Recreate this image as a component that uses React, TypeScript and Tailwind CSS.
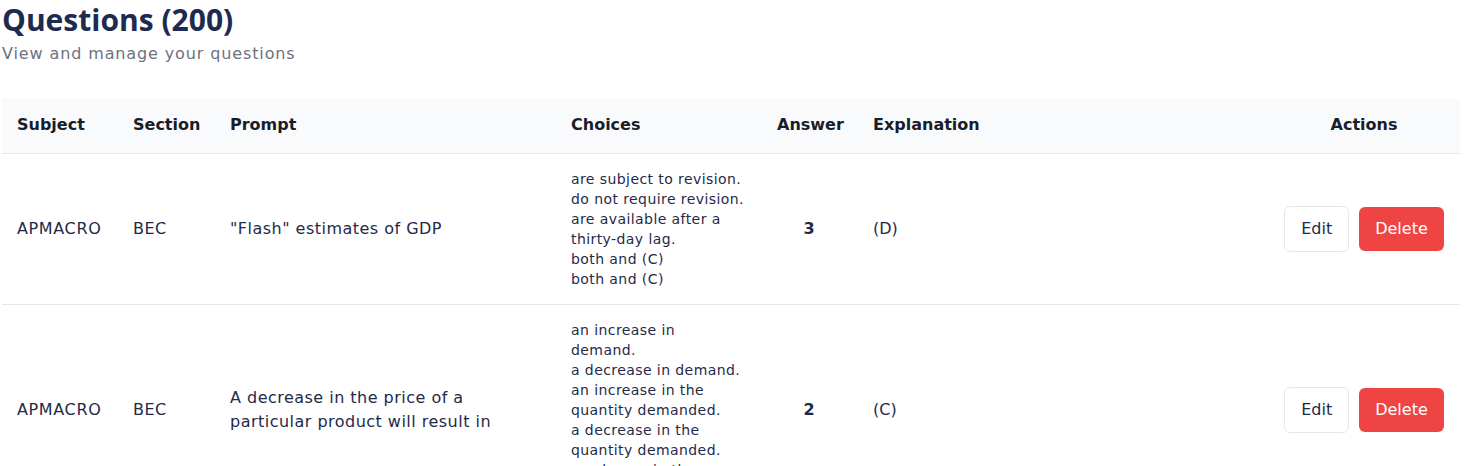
import React from "react"

type Question = {
    id: number
    subject: string
    section: string
    prompt: string
    choices: string[] // "\n" marks where the choice wraps in the narrow column
    answer: number
    explanation: string
}

const QUESTIONS: Question[] = [
    {
        id: 1,
        subject: "APMACRO",
        section: "BEC",
        prompt: '"Flash" estimates of GDP',
        choices: [
            "are subject to revision.",
            "do not require revision.",
            "are available after a\nthirty-day lag.",
            "both and (C)",
            "both and (C)",
        ],
        answer: 3,
        explanation: "(D)",
    },
    {
        id: 2,
        subject: "APMACRO",
        section: "BEC",
        prompt: "A decrease in the price of a particular product will result in",
        choices: [
            "an increase in\ndemand.",
            "a decrease in demand.",
            "an increase in the\nquantity demanded.",
            "a decrease in the\nquantity demanded.",
            "no change in the\nquantity demanded.",
        ],
        answer: 2,
        explanation: "(C)",
    },
]

const App = () => {
    return (
        <div
            className="min-h-screen bg-white px-[2px] text-[#1f2a48]"
            style={{ fontFamily: '"DejaVu Sans", sans-serif' }}
        >
            <h1
                className="text-[30px] font-bold leading-[40px] text-[#1e2b50]"
                style={{ fontFamily: '"Open Sans", sans-serif' }}
            >
                Questions (200)
            </h1>
            <p className="mt-0.5 text-base tracking-[0.055em] text-[#6b7280]">View and manage your questions</p>

            <table className="mt-8 w-[1458px] table-fixed border-collapse text-left">
                <colgroup>
                    <col className="w-[115px]" />
                    <col className="w-[97px]" />
                    <col className="w-[341px]" />
                    <col className="w-[206px]" />
                    <col className="w-[96px]" />
                    <col className="w-[411px]" />
                    <col className="w-[192px]" />
                </colgroup>
                <thead className="bg-[#f9fafb]">
                    <tr className="border-b border-[#e5e7eb] text-base text-[#181d2b]">
                        <th className="h-[55px] px-[15px] font-semibold">Subject</th>
                        <th className="px-4 font-semibold">Section</th>
                        <th className="px-4 font-semibold">Prompt</th>
                        <th className="px-4 font-semibold">Choices</th>
                        <th className="px-4 text-center font-semibold">Answer</th>
                        <th className="px-4 font-semibold">Explanation</th>
                        <th className="px-4 text-center font-semibold">Actions</th>
                    </tr>
                </thead>
                <tbody>
                    {QUESTIONS.map((q) => (
                        <tr key={q.id} className="border-b border-[#e5e7eb] align-middle">
                            <td className="px-[15px] py-[15px] text-base tracking-[0.04em]">{q.subject}</td>
                            <td className="px-4 text-base tracking-[0.03em]">{q.section}</td>
                            <td className="px-4 text-base leading-6 tracking-[0.03em]">{q.prompt}</td>
                            <td className="px-4 py-[15px] text-sm leading-5 tracking-[0.03em]">
                                {q.choices.map((c, i) => (
                                    <div key={i} className="whitespace-pre-line">
                                        {c}
                                    </div>
                                ))}
                            </td>
                            <td className="px-4 text-center text-base font-semibold">{q.answer}</td>
                            <td className="px-4 text-base">{q.explanation}</td>
                            <td className="px-4">
                                <div className="flex items-center justify-center gap-2.5">
                                    <button className="rounded-md border border-[#e5e7eb] bg-white px-4 py-2.5 text-base font-medium leading-6 text-[#1e2a47]">
                                        Edit
                                    </button>
                                    <button className="rounded-md bg-[#ef4444] px-4 py-2.5 text-base font-medium leading-6 text-white">
                                        Delete
                                    </button>
                                </div>
                            </td>
                        </tr>
                    ))}
                </tbody>
            </table>
        </div>
    )
}

export default App
